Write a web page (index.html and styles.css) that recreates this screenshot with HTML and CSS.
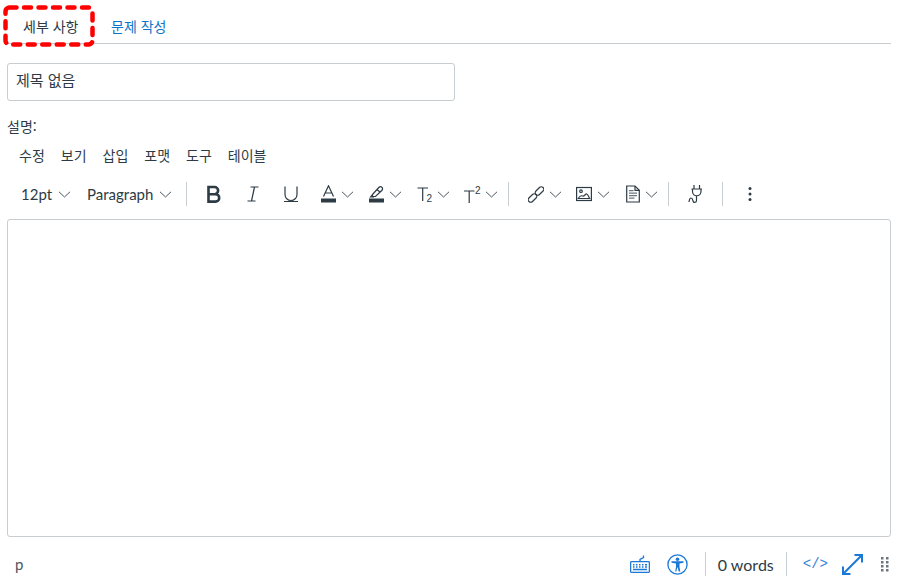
FILE: index.html
```html
<!DOCTYPE html>
<html lang="ko">
<head>
<meta charset="utf-8">
<title>세부 사항</title>
<link rel="stylesheet" href="styles.css">
</head>
<body>
<div class="page">
  <nav class="tabs">
    <a class="tab tab-active">세부 사항<svg class="highlight" width="92" height="42" viewBox="0 0 92 42"><rect x="2.500" y="2.500" width="87" height="37" rx="4"/></svg></a>
    <a class="tab tab-link">문제 작성</a>
  </nav>
  <div class="title-field">제목 없음</div>
  <div class="desc-label">설명:</div>
  <div class="menubar">
    <span>수정</span><span>보기</span><span>삽입</span><span>포맷</span><span>도구</span><span>테이블</span>
  </div>
  <div class="toolbar">
    <span class="tb tb-size">12pt<svg class="chev" viewBox="0 0 13 7"><path d="M1 .8 6.500 6 12 .8"/></svg></span>
    <span class="tb tb-para">Paragraph<svg class="chev" viewBox="0 0 13 7"><path d="M1 .8 6.500 6 12 .8"/></svg></span>
    <i class="sep sep-a"></i>
    <span class="tb tb-icon"><svg width="16" height="18" viewBox="0 0 16 18"><path class="bold" d="M2.500 2h6a3.600 3.600 0 0 1 0 7.200h-6zM2.500 9.200h7a3.700 3.700 0 0 1 0 7.400h-7z"/></svg></span>
    <span class="tb tb-icon"><svg width="16" height="18" viewBox="0 0 16 18"><path class="thin" d="M5.500 2h8M2.500 16h8M9.500 2 6.500 16"/></svg></span>
    <span class="tb tb-icon"><svg width="16" height="18" viewBox="0 0 16 18"><path class="thin" d="M2 1.500v8a6 6 0 0 0 12 0v-8M1 16.500h14"/></svg></span>
    <span class="tb tb-drop tb-first"><svg width="15" height="18" viewBox="0 0 15 18"><path class="thin" d="M2.500 11.500 7.500 .8l5 10.700M4.200 8h6.600"/><rect x="0" y="13.500" width="15" height="4" fill="#2d3b45"/></svg><svg class="chev" viewBox="0 0 13 7"><path d="M1 .8 6.500 6 12 .8"/></svg></span>
    <span class="tb tb-drop"><svg width="15" height="18" viewBox="0 0 15 18"><path class="thin" d="M3.500 9.500 9.800 2.500c1-1 2-1 3-.2s1 2 .2 3L6.500 11.500H3.500zM8 4.500l3.500 3M3.500 9.500 1.500 12H5"/><rect x="0" y="13.500" width="15" height="4" fill="#2d3b45"/></svg><svg class="chev" viewBox="0 0 13 7"><path d="M1 .8 6.500 6 12 .8"/></svg></span>
    <span class="tb tb-drop"><svg width="15" height="18" viewBox="0 0 15 18"><path class="thin" d="M.5 3h10.500M5.700 3v13"/><text class="sub" x="9.500" y="16.500">2</text></svg><svg class="chev" viewBox="0 0 13 7"><path d="M1 .8 6.500 6 12 .8"/></svg></span>
    <span class="tb tb-sup"><svg width="18" height="18" viewBox="0 0 18 18"><path class="thin" d="M1 6h10.500M6.200 6v12"/><text class="sup" x="12" y="9">2</text></svg><svg class="chev" viewBox="0 0 13 7"><path d="M1 .8 6.500 6 12 .8"/></svg></span>
    <i class="sep sep-b"></i>
    <span class="tb tb-drop tb-link"><svg width="16" height="18" viewBox="0 0 16 18"><g class="thin"><rect x="-5" y="-2.500" width="10" height="5" rx="2.500" transform="translate(4.500 13) rotate(-45)"/><rect x="-5" y="-2.500" width="10" height="5" rx="2.500" transform="translate(11.500 6) rotate(-45)"/></g></svg><svg class="chev" viewBox="0 0 13 7"><path d="M1 .8 6.500 6 12 .8"/></svg></span>
    <span class="tb tb-drop"><svg width="16" height="18" viewBox="0 0 16 18"><g class="thin"><rect x=".6" y="2.500" width="14.800" height="13"/><circle cx="5" cy="6.200" r="1.300"/><path d="M2.200 13.500c1.500-2.500 3-3.200 4.500-2.500s2.800-2.500 4-2 2 2.800 3 4.500z"/></g></svg><svg class="chev" viewBox="0 0 13 7"><path d="M1 .8 6.500 6 12 .8"/></svg></span>
    <span class="tb tb-doc"><svg width="14" height="18" viewBox="0 0 14 18"><path class="thin" d="M.7 1h8.300l4.300 4.300v11.700H.7z"/><path class="thin" d="M9 1v4.300h4.300"/><path class="doc-lines" d="M3 5h4.500v1.200H3zM3 7.500h8v1.200H3zM3 10h8v1.200H3zM3 12.500h5.500v1.200H3z"/></svg><svg class="chev" viewBox="0 0 13 7"><path d="M1 .8 6.500 6 12 .8"/></svg></span>
    <i class="sep sep-c"></i>
    <span class="tb tb-plug"><svg width="16" height="20" viewBox="0 0 16 20"><path class="thin" d="M6 1v4M11.500 1v4M3.500 5h10.500M4.500 5v2.500a4 4 0 0 0 8.500 0V5M8.500 11.500v5c0 2.500-3 2.500-3.500.5s-.5-3-2-3-1.500 1.500-2 4"/></svg></span>
    <i class="sep sep-d"></i>
    <span class="tb tb-more"><svg width="4" height="16" viewBox="0 0 4 16"><circle cx="2" cy="2.500" r="1.500"/><circle cx="2" cy="8" r="1.500"/><circle cx="2" cy="13.500" r="1.500"/></svg></span>
  </div>
  <div class="editor"></div>
  <div class="statusbar">
    <span class="path">p</span>
    <svg class="st-kb" width="20" height="18" viewBox="0 0 20 18"><g class="blue"><rect x=".6" y="6.600" width="18.800" height="10.800" rx="1.200"/><path d="M10 6.500V4.500l3.500-2V.5"/></g><path class="keys" d="M3 9.700h1.500M6 9.700h1.500M9 9.700h1.500M12 9.700h1.500M15 9.700h2M3 12h1.500M6 12h1.500M9 12h1.500M12 12h1.500M15 12h2M3 14.500h14"/></svg>
    <svg class="st-a11y" width="21" height="21" viewBox="0 0 21 21"><circle class="blue" cx="10.500" cy="10.500" r="9.600"/><circle cx="10.500" cy="5.300" r="1.800" class="blue-fill"/><path class="blue-fill" d="M4.500 7.300h12v1.400l-4 .8v3.500l.8 4.500h-1.600l-1-4h-.4l-1 4H8.200L9 13V9.500l-4.500-.8z"/></svg>
    <i class="sep st-sep1"></i>
    <span class="words">0 words</span>
    <i class="sep st-sep2"></i>
    <span class="code">&lt;/&gt;</span>
    <svg class="st-full" width="21" height="21" viewBox="0 0 21 21"><path class="blue blue-thick" d="M1 20 20 1M12.500 1H20v7.500M1 12.500V20h7.500"/></svg>
    <span class="grip"><svg width="8" height="15" viewBox="0 0 8 15"><path fill="#6b7780" d="M0 0h2.500v2.500H0zM5 0h2.500v2.500H5zM0 4h2.500v2.500H0zM5 4h2.500v2.500H5zM0 8h2.500v2.500H0zM5 8h2.500v2.500H5zM0 12h2.500v2.500H0zM5 12h2.500v2.500H5z"/></svg></span>
  </div>
</div>
</body>
</html>
```

FILE: styles.css
```css
* { box-sizing: border-box; }
html, body { margin: 0; background: #fff; }
body {
  width: 899px;
  height: 588px;
  overflow: hidden;
  font-family: Lato, "Noto Sans CJK KR", sans-serif;
  color: #2d3b45;
}
.page { padding: 0 8px 0 7px; }

.tabs {
  display: flex;
  height: 44px;
  border-bottom: 1px solid #c7cdd1;
}
.tab {
  position: relative;
  display: flex;
  align-items: center;
  font-family: "Noto Sans CJK KR", sans-serif;
  font-size: 14px;
  padding-top: 8px;
  line-height: 16px;
}
.tab-active { width: 87px; padding-left: 16px; color: #2d3b45; }
.tab-link { margin-left: 17px; color: #0a74c8; }
.highlight {
  position: absolute;
  left: -4px;
  top: 5px;
  fill: none;
  stroke: #ff0000;
  stroke-width: 4.500;
  stroke-dasharray: 7 7.500;
  stroke-linecap: round;
}

.title-field {
  margin-top: 19px;
  width: 448px;
  height: 38px;
  padding: 0 8px;
  border: 1px solid #c7cdd1;
  border-radius: 3px;
  font-family: "Noto Sans CJK KR", sans-serif;
  font-size: 15px;
  line-height: 32px;
}
.desc-label {
  margin-top: 15px;
  font-family: "Noto Sans CJK KR", sans-serif;
  font-size: 14px;
  line-height: 20px;
}
.menubar {
  display: flex;
  gap: 16px;
  margin-top: 10px;
  padding-left: 12px;
  height: 20px;
  font-family: "Noto Sans CJK KR", sans-serif;
  font-size: 14px;
  line-height: 19px;
}
.toolbar {
  display: flex;
  align-items: center;
  height: 36px;
  margin-top: 10px;
  font-size: 15px;
}
.tb { display: flex; align-items: center; flex: none; }
.chev { width: 13px; height: 7px; margin-left: 6px; fill: none; stroke: #4a5660; stroke-width: 1; }
.tb-size { width: 80px; padding-left: 14px; }
.tb-para { width: 99px; }
.sep { display: block; flex: none; width: 1px; height: 24px; background: #c7cdd1; }
.sep-a { margin-right: 19px; }
.tb-icon { width: 38.500px; }
.tb-drop { width: 48px; }
.tb-drop .chev, .tb-doc .chev { margin-left: 5px; }
.tb-first { margin-left: -.5px; }
.tb-sup { width: 45px; margin-left: -2px; }
.tb-sup .chev { margin-left: 4px; }
.sep-b { margin-right: 19px; }
.tb-doc { width: 42px; margin-left: 2px; }
.sep-c { margin-right: 19px; }
.tb-plug { width: 34px; }
.sep-d { margin-right: 25px; }
.tb-more { width: 4px; }
.tb-more svg { fill: #2d3b45; }
.tb-icon svg, .tb-plug svg { display: block; }
.thin { fill: none; stroke: #2d3b45; stroke-width: 1.200; }
.bold { fill: none; stroke: #2d3b45; stroke-width: 2.600; }
.doc-lines { fill: #6b7780; }
.sub { font-family: "Liberation Sans", sans-serif; font-size: 10px; fill: #2d3b45; }
.sup { font-family: "Liberation Sans", sans-serif; font-size: 10px; fill: #2d3b45; }

.editor {
  height: 318px;
  margin-top: 7px;
  border: 1px solid #c7cdd1;
  border-radius: 3px;
}
.statusbar {
  display: flex;
  align-items: center;
  height: 34px;
  margin-top: 10px;
  padding-left: 8px;
  font-size: 16px;
}
.path { font-size: 15px; flex: 1; color: #4a5660; }
.blue { fill: none; stroke: #1a78d6; stroke-width: 1.300; }
.blue-fill { fill: #1a78d6; }
.blue-thick { stroke-width: 2; }
.keys { fill: none; stroke: #1a78d6; stroke-width: 1.500; }
.st-a11y { margin-left: 17px; }
.st-sep1 { margin-left: 17px; }
.words { margin: 0 12px; color: #2d3b45; }
.code { margin-left: 16px; color: #3b84d6; font-family: "Liberation Mono", monospace; font-size: 14px; }
.st-full { margin-left: 14px; }
.grip { display: flex; margin-left: 18px; margin-right: 2px; }
```
